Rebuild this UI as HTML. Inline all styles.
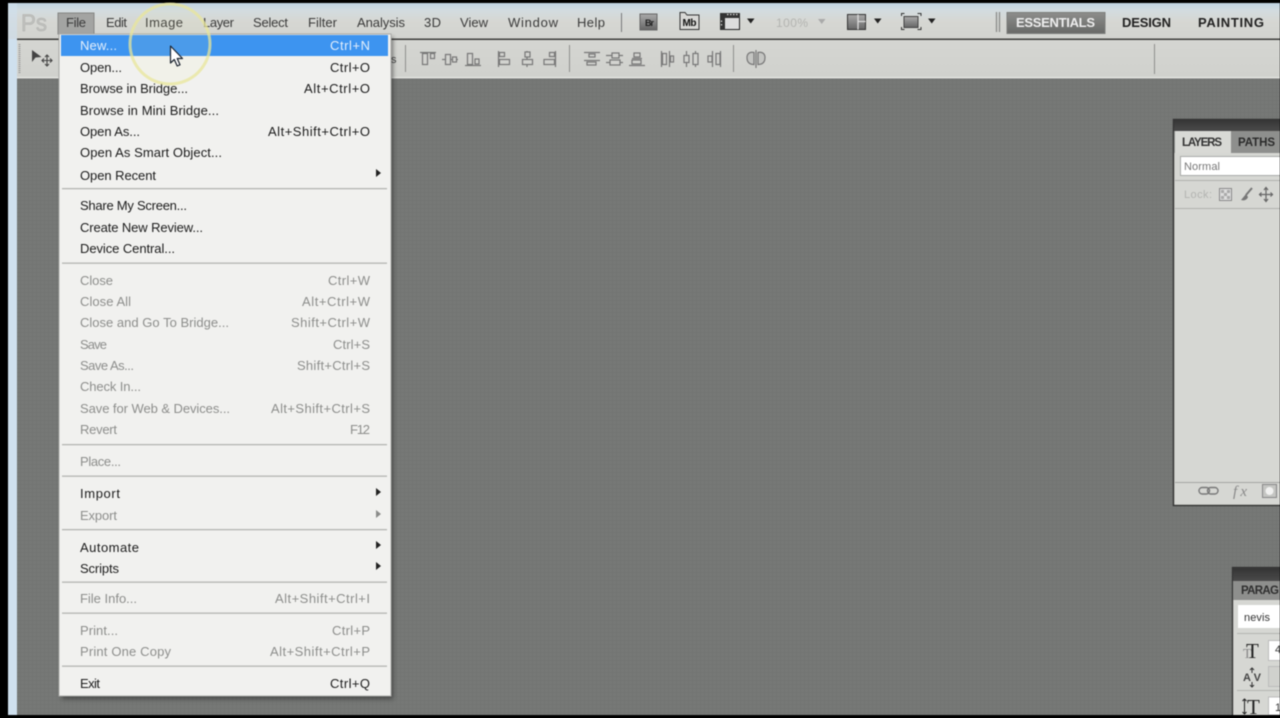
<!DOCTYPE html>
<html><head><meta charset="utf-8"><title>Photoshop File Menu</title>
<style>
html,body{margin:0;padding:0;background:#000;width:1280px;height:718px;overflow:hidden}
svg{display:block;position:absolute;left:0;top:0;filter:blur(.45px)}
text{font-family:"Liberation Sans",sans-serif;font-size:13px;fill:#1c1c1c}
.g text,text.g{fill:#8d8e8c}
.k{fill:#3a3a3a}
.i{fill:none;stroke:#777;stroke-width:1.2}
.h{font-weight:bold;font-size:13px}
</style></head><body>
<svg width="1280" height="718" viewBox="0 0 1280 718" xmlns="http://www.w3.org/2000/svg">
<defs>
<linearGradient id="tb" x1="0" y1="0" x2="0" y2="1"><stop offset="0" stop-color="#bfd3e2"/><stop offset=".22" stop-color="#d3dcdf"/><stop offset=".5" stop-color="#d6d7d3"/><stop offset="1" stop-color="#d2d3cf"/></linearGradient>
<linearGradient id="ess" x1="0" y1="0" x2="0" y2="1"><stop offset="0" stop-color="#8d8e8c"/><stop offset="1" stop-color="#686967"/></linearGradient>
<linearGradient id="opt" x1="0" y1="0" x2="0" y2="1"><stop offset="0" stop-color="#d5d6d2"/><stop offset="1" stop-color="#d0d1cd"/></linearGradient>
<linearGradient id="hd" x1="0" y1="0" x2="0" y2="1"><stop offset="0" stop-color="#333"/><stop offset="1" stop-color="#4a4a4a"/></linearGradient>
<linearGradient id="br" x1="0" y1="0" x2="0" y2="1"><stop offset="0" stop-color="#aaa"/><stop offset="1" stop-color="#666"/></linearGradient>
<pattern id="grid" width="4" height="4" patternUnits="userSpaceOnUse"><rect width="4" height="4" fill="#767876"/><path d="M0 .5H4M.5 0V4" stroke="#727472" stroke-width="1"/></pattern>
<filter id="sh" x="-5%" y="-5%" width="110%" height="110%"><feGaussianBlur stdDeviation="2"/></filter>
</defs>

<rect width="1280" height="718" fill="#000"/>
<rect x="8" y="3" width="1272" height="712" fill="#cfe0ee"/>
<rect x="17" y="78" width="1263" height="637" fill="url(#grid)"/>
<rect x="17" y="77" width="1263" height="1.4" fill="#e6e7e4"/>

<!-- title bar -->
<rect x="8" y="3" width="1272" height="36" fill="url(#tb)"/>
<rect x="8" y="3" width="9" height="75" fill="#cfe0ee" opacity=".6"/>
<rect x="17" y="38.500" width="1263" height="1.600" fill="#3c3c3a"/>
<rect x="17" y="40" width="1263" height="37" fill="url(#opt)"/>
<text x="21" y="31" style="font-size:24px;fill:#c0c1be;stroke:#aeafac;stroke-width:.5" textLength="26" lengthAdjust="spacingAndGlyphs">Ps</text>

<!-- File button -->
<rect x="58" y="13" width="36" height="21" fill="#a3a4a2" stroke="#858684"/>

<text x="66" y="27" textLength="20" class="k">File</text>
<text x="106" y="27" textLength="21" class="k">Edit</text>
<text x="145" y="27" textLength="38" class="k">Image</text>
<text x="203" y="27" textLength="31" class="k">Layer</text>
<text x="253" y="27" textLength="35" class="k">Select</text>
<text x="308" y="27" textLength="29" class="k">Filter</text>
<text x="357" y="27" textLength="48" class="k">Analysis</text>
<text x="424" y="27" textLength="17" class="k">3D</text>
<text x="460" y="27" textLength="28" class="k">View</text>
<text x="508" y="27" textLength="50" class="k">Window</text>
<text x="577" y="27" textLength="28" class="k">Help</text>

<path d="M621.500 13V32" stroke="#77787a" stroke-width="1"/>
<!-- Br -->
<rect x="640" y="14" width="17" height="16" fill="url(#br)" stroke="#666"/>
<text x="645" y="26" style="font-size:9px;font-weight:bold;fill:#222" textLength="9">Br</text>
<!-- Mb -->
<path d="M680 12.500h5l2 2.500h12v14.500h-19z" fill="#d8d8d6" stroke="#333" stroke-width="1"/>
<text x="682.500" y="26" style="font-size:10px;font-weight:bold;fill:#111" textLength="14">Mb</text>
<!-- film -->
<rect x="720.500" y="13.500" width="19" height="16" fill="#ddd" stroke="#222"/>
<rect x="720" y="13" width="20" height="5" fill="#333"/><rect x="720" y="13" width="5" height="17" fill="#333"/>
<path d="M727 14.500h1.500M730 14.500h1.500M733 14.500h1.500M736 14.500h1.500M721.500 20.500v1.500M721.500 24v1.500" stroke="#ddd" stroke-width="1.200"/>
<path d="M747 18.500h7.500l-3.750 5z" fill="#222"/>
<text x="776" y="27" class="g" style="font-size:12px;fill:#b3b4b1" textLength="32">100%</text>
<path d="M818 19h7.500l-3.750 5z" fill="#aaa"/>
<!-- arrange docs -->
<rect x="847.500" y="14.500" width="18" height="15" fill="url(#br)" stroke="#333"/>
<path d="M858 14.500v15M858 21.500h7.500" stroke="#ddd" stroke-width="1.300"/>
<path d="M874 18.500h7.500l-3.750 5z" fill="#222"/>
<!-- screen mode -->
<rect x="904" y="16.500" width="14" height="11" fill="url(#br)" stroke="#444"/>
<path d="M901.500 16v-2.500h3M917.500 13.500h3.500v2.500M901.500 27v2.500h3M917.500 29.500h3.500v-2.500" fill="none" stroke="#333"/>
<path d="M928 18.500h7.500l-3.750 5z" fill="#222"/>
<!-- workspace -->
<path d="M996.500 12V32M999.500 12V32" stroke="#8b8c8a" stroke-width="1.300"/>
<rect x="1007" y="12.500" width="98" height="21" fill="url(#ess)" stroke="#7c7d7b"/>
<text x="1016" y="27" class="h" style="fill:#eee" textLength="79">ESSENTIALS</text>
<text x="1122" y="27" class="h" style="fill:#222" textLength="49">DESIGN</text>
<text x="1198" y="27" class="h" style="fill:#222" textLength="66">PAINTING</text>

<!-- options bar -->
<path d="M19.500 44V73" stroke="#999" stroke-width="2" stroke-dasharray="1 1"/>
<path d="M32 50l9.500 7-6 .5-3.500 4.500z" fill="#444"/>
<path d="M47 55v11M41.500 60.500h11M45 57l2-2 2 2M45 64l2 2 2-2M44 58.500l-2 2 2 2M50 58.500l2 2-2 2" fill="none" stroke="#444" stroke-width="1.100"/>
<path d="M405.500 45V72M569.500 45V72M733.500 45V72M1154.500 44V74" stroke="#8e8f8d" stroke-width="1"/>
<text x="391" y="63" style="font-size:11px;fill:#444">s</text>

<g class="i">
<!-- align top -->
<path d="M420 52.500h16"/><rect x="422.500" y="53.500" width="5" height="11"/><rect x="430.500" y="53.500" width="4" height="5"/>
<!-- align vcenter -->
<path d="M442 59.500h16"/><rect x="445.500" y="54.500" width="5" height="10" fill="#d3d4d0"/><rect x="452.500" y="57" width="4" height="5" fill="#d3d4d0"/>
<!-- align bottom -->
<path d="M465 65.500h16"/><rect x="467.500" y="53.500" width="5" height="11"/><rect x="475" y="59" width="4" height="5"/>
<!-- align left -->
<path d="M498.500 51V67"/><rect x="499.500" y="52.500" width="5" height="4"/><rect x="499.500" y="59.500" width="10" height="5"/>
<!-- align hcenter -->
<path d="M527 51V67"/><rect x="525" y="52" width="5" height="5" fill="#d3d4d0"/><rect x="522.500" y="59.500" width="10" height="5" fill="#d3d4d0"/>
<!-- align right -->
<path d="M555.500 51V67"/><rect x="549.500" y="52.500" width="5" height="4"/><rect x="544" y="59.500" width="10.500" height="5"/>
<!-- dist top -->
<path d="M584 52.500h16M584 60.500h16"/><rect x="589" y="54" width="6" height="3"/><rect x="587" y="62" width="9" height="3"/>
<!-- dist vcenter -->
<path d="M606 55.500h17M606 62.500h17"/><rect x="612" y="53" width="7" height="5" fill="#d3d4d0"/><rect x="610" y="60" width="10" height="5" fill="#d3d4d0"/>
<!-- dist bottom -->
<path d="M629 65.500h16M632 58.500h10"/><rect x="634" y="53" width="6" height="4"/><rect x="632" y="60" width="9" height="4"/>
<!-- dist left -->
<path d="M661.500 51V67M669.500 51V67"/><rect x="662.500" y="53.500" width="4" height="11"/><rect x="670.500" y="56" width="3" height="6"/>
<!-- dist hcenter -->
<path d="M686.500 51V67M695.500 51V67"/><rect x="684" y="55.500" width="5" height="7" fill="#d3d4d0"/><rect x="693" y="53.500" width="5" height="11" fill="#d3d4d0"/>
<!-- dist right -->
<path d="M712.500 51V67M720.500 51V67"/><rect x="708" y="56" width="4" height="6"/><rect x="716" y="53.500" width="4" height="11"/>
<!-- auto align -->
<path d="M756 50V68"/><path d="M754 52.500c-4-1-7 1-7 5s2 7 7 7zM758 52.500c4-1 7 1 7 5s-2 7-7 7z" fill="#c4c5c2"/>
</g>

<!-- LAYERS panel -->
<rect x="1173.500" y="119.500" width="110" height="386" fill="#d6d7d3" stroke="#333" stroke-width="1.400"/>
<rect x="1174" y="119" width="106" height="12" fill="url(#hd)"/>
<rect x="1174" y="131" width="106" height="22" fill="#8e8f8d"/>
<rect x="1175" y="131" width="56" height="22" fill="#d8d9d5"/>
<text x="1182" y="146" class="h" style="font-size:11.500px;fill:#333" textLength="40">LAYERS</text>
<text x="1238" y="146" class="h" style="font-size:11.500px;fill:#2b2b2b" textLength="37">PATHS</text>
<rect x="1180.500" y="156.500" width="110" height="19" fill="#fff" stroke="#a9aaa8"/>
<text x="1184" y="170" style="font-size:11px;fill:#777" textLength="36">Normal</text>
<path d="M1175 180.500H1280M1175 208.500H1280" stroke="#b0b1ae" stroke-width="1"/>
<text x="1184" y="198" style="font-size:11px;fill:#b3b4b1" textLength="28">Lock:</text>
<rect x="1219.500" y="188.500" width="12" height="12" fill="#ddd" stroke="#888"/>
<path d="M1221 190h3v3h-3zM1227 190h3v3h-3zM1224 193h3v3h-3zM1221 196h3v3h-3zM1227 196h3v3h-3z" fill="#aaa"/>
<path d="M1252 188l-6 7" stroke="#777" stroke-width="2"/><path d="M1246 194l-5 6c3 1 6 0 7-3z" fill="#777"/>
<path d="M1266 187.500v14M1259 194.500h14M1264 190l2-2.500 2 2.500M1264 199l2 2.500 2-2.500M1261.500 192.500l-2 2 2 2M1270.500 192.500l2 2-2 2" fill="none" stroke="#666" stroke-width="1.200"/>
<path d="M1175 482.500H1280" stroke="#a5a6a3" stroke-width="1"/>
<rect x="1199" y="487.500" width="10.500" height="6.500" rx="3.200" fill="none" stroke="#777" stroke-width="1.400"/>
<rect x="1207.500" y="487.500" width="10.500" height="6.500" rx="3.200" fill="none" stroke="#777" stroke-width="1.400"/>
<text x="1233" y="496" style="font-family:'Liberation Serif',serif;font-style:italic;font-size:15px;fill:#888" textLength="14">fx</text>
<rect x="1262.500" y="484.500" width="14" height="13" fill="#c4c5c2" stroke="#888"/>
<circle cx="1269.500" cy="491" r="4" fill="#f1f1f0"/>

<!-- PARAGRAPH panel -->
<rect x="1232.500" y="567.500" width="60" height="160" fill="#d6d7d3" stroke="#333" stroke-width="1.300"/>
<rect x="1233" y="567" width="47" height="14" fill="url(#hd)"/>
<rect x="1233" y="581" width="47" height="19" fill="#8e8f8d"/>
<text x="1241" y="594" class="h" style="font-size:11.500px;fill:#2f2f2f" textLength="38">PARAG</text>
<rect x="1238" y="605" width="50" height="23" fill="#fff"/>
<text x="1244" y="621" style="font-size:11px;fill:#333" textLength="26">nevis</text>
<path d="M1237 633.500H1280M1237 690.500H1280" stroke="#b3b4b1" stroke-width="1"/>
<text x="1243" y="658" style="font-family:'Liberation Serif',serif;font-size:14px;fill:#888">T</text>
<text x="1246" y="658" style="font-family:'Liberation Serif',serif;font-size:21px;fill:#222">T</text>
<rect x="1268.500" y="640.500" width="20" height="20" fill="#fff" stroke="#bbb"/>
<text x="1275" y="653" style="font-size:11px;fill:#333">4</text>
<text x="1243" y="681" style="font-size:11px;font-weight:bold;fill:#444" textLength="18">AV</text>
<path d="M1252 668v5M1252 682v5M1250 670l2-2 2 2M1250 685l2 2 2-2" fill="none" stroke="#333"/>
<rect x="1268.500" y="666.500" width="20" height="20" fill="#d0d1cd" stroke="#bbb"/>
<text x="1247" y="714" style="font-family:'Liberation Serif',serif;font-size:21px;fill:#222">T</text>
<path d="M1244.500 699v15M1242.500 701l2-2 2 2M1242.500 712l2 2 2-2" fill="none" stroke="#222"/>
<rect x="1268.500" y="697" width="20" height="18" fill="#fff" stroke="#bbb"/>
<text x="1275" y="711" style="font-size:11px;fill:#333">1</text>
<rect x="0" y="715" width="1280" height="3" fill="#000"/>

<!-- MENU -->
<rect x="62" y="37" width="331" height="662" fill="#222" opacity=".55" filter="url(#sh)"/>
<rect x="59" y="34" width="332" height="662" fill="#f1f1ef" stroke="#a9aaa7" stroke-width="1"/>
<rect x="61" y="35" width="327" height="21" fill="#3d94f0"/>
<g fill="#b4b5b2">
<rect x="62" y="188" width="325" height="1.300"/><rect x="62" y="262.500" width="325" height="1.300"/><rect x="62" y="444" width="325" height="1.300"/><rect x="62" y="475.500" width="325" height="1.300"/><rect x="62" y="529" width="325" height="1.300"/><rect x="62" y="581.500" width="325" height="1.300"/><rect x="62" y="612.500" width="325" height="1.300"/><rect x="62" y="665.500" width="325" height="1.300"/>
</g>
<text x="80" y="50" textLength="37" style="fill:#e4effb">New...</text><text x="330" y="50" textLength="40" style="fill:#e4effb">Ctrl+N</text>
<text x="80" y="72" textLength="42">Open...</text><text x="330" y="72" textLength="40">Ctrl+O</text>
<text x="80" y="93" textLength="108">Browse in Bridge...</text><text x="304" y="93" textLength="66">Alt+Ctrl+O</text>
<text x="80" y="115" textLength="139">Browse in Mini Bridge...</text>
<text x="80" y="136" textLength="60">Open As...</text><text x="268" y="136" textLength="102">Alt+Shift+Ctrl+O</text>
<text x="80" y="157" textLength="142">Open As Smart Object...</text>
<text x="80" y="180" textLength="76">Open Recent</text>
<path d="M376 169l5 4-5 4z" fill="#222"/>
<text x="80" y="210" textLength="107">Share My Screen...</text>
<text x="80" y="232" textLength="123">Create New Review...</text>
<text x="80" y="253" textLength="95">Device Central...</text>
<g class="g">
<text x="80" y="285" textLength="33">Close</text><text x="328" y="285" textLength="42">Ctrl+W</text>
<text x="80" y="306" textLength="51">Close All</text><text x="302" y="306" textLength="68">Alt+Ctrl+W</text>
<text x="80" y="327" textLength="149">Close and Go To Bridge...</text><text x="291" y="327" textLength="79">Shift+Ctrl+W</text>
<text x="80" y="349" textLength="27">Save</text><text x="333" y="349" textLength="37">Ctrl+S</text>
<text x="80" y="370" textLength="54">Save As...</text><text x="297" y="370" textLength="73">Shift+Ctrl+S</text>
<text x="80" y="391" textLength="61">Check In...</text>
<text x="80" y="413" textLength="150">Save for Web &amp; Devices...</text><text x="271" y="413" textLength="99">Alt+Shift+Ctrl+S</text>
<text x="80" y="434" textLength="37">Revert</text><text x="350" y="434" textLength="20">F12</text>
<text x="80" y="466" textLength="41">Place...</text>
<text x="80" y="520" textLength="37">Export</text>
<text x="80" y="603" textLength="57">File Info...</text><text x="275" y="603" textLength="95">Alt+Shift+Ctrl+I</text>
<text x="80" y="635" textLength="38">Print...</text><text x="332" y="635" textLength="38">Ctrl+P</text>
<text x="80" y="656" textLength="91">Print One Copy</text><text x="270" y="656" textLength="100">Alt+Shift+Ctrl+P</text>
</g>
<text x="80" y="498" textLength="40">Import</text>
<path d="M376 488l5 4-5 4z" fill="#222"/>
<path d="M376 510l5 4-5 4z" fill="#8b8c8a"/>
<text x="80" y="552" textLength="59">Automate</text>
<path d="M376 541l5 4-5 4z" fill="#222"/>
<text x="80" y="573" textLength="39">Scripts</text>
<path d="M376 562l5 4-5 4z" fill="#222"/>
<text x="80" y="688" textLength="20">Exit</text><text x="330" y="688" textLength="40">Ctrl+Q</text>

<!-- cursor highlight -->
<circle cx="170" cy="44" r="40" fill="#f4f2a0" fill-opacity=".08" stroke="#e8e69a" stroke-opacity=".75" stroke-width="3"/>
<path d="M170.500 46v17l3.800-3.500 2.900 6.500 2.800-1.200-2.800-6.300h5.300z" fill="#fff" stroke="#1c2430" stroke-width="1.200" stroke-linejoin="round"/>
</svg>
</body></html>
